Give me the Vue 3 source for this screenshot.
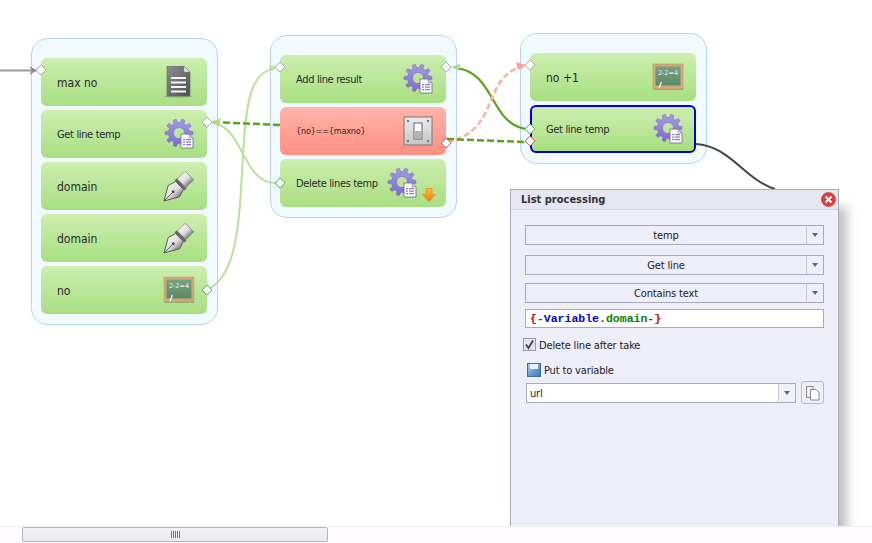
<script setup>
const groups = [
  {
    id: 1, x: 31, y: 38,
    nodes: [
      { label: "max no", icon: "doc", size: "big" },
      { label: "Get line temp", icon: "gear" },
      { label: "domain", icon: "pen", size: "big" },
      { label: "domain", icon: "pen", size: "big" },
      { label: "no", icon: "board", size: "big" },
    ],
  },
  {
    id: 2, x: 270, y: 35,
    nodes: [
      { label: "Add line result", icon: "gear" },
      { label: "{no}=={maxno}", icon: "switch", size: "tiny", red: true },
      { label: "Delete lines temp", icon: "gear", down: true },
    ],
  },
  {
    id: 3, x: 520, y: 33,
    nodes: [
      { label: "no +1", icon: "board", size: "big" },
      { label: "Get line temp", icon: "gear", selected: true },
    ],
  },
];

const ports = [
  { x: 41, y: 70 },
  { x: 207, y: 122 },
  { x: 207, y: 290, color: "#58b85a" },
  { x: 280, y: 67 },
  { x: 446, y: 67 },
  { x: 446, y: 143, color: "#f4585a" },
  { x: 280, y: 183, color: "#58b85a" },
  { x: 530, y: 65 },
  { x: 530, y: 129, color: "#58b85a" },
  { x: 530, y: 141, color: "#f4585a" },
];

const selects = [
  { text: "temp", gap: 0 },
  { text: "Get line", gap: 10 },
  { text: "Contains text", gap: 8 },
];

function diamond(p) {
  return `${p.x},${p.y - 5} ${p.x + 5},${p.y} ${p.x},${p.y + 5} ${p.x - 5},${p.y}`;
}

// gear outline, ten teeth round (16,15), with the hole cut by evenodd
function gearPath() {
  const cx = 16, cy = 15, r1 = 10.5, r2 = 14, n = 10;
  const pts = [];
  for (let i = 0; i < n; i++) {
    const a = (i / n) * Math.PI * 2;
    const w = Math.PI / n;
    const at = (r, t) => `${(cx + r * Math.cos(t)).toFixed(1)} ${(cy + r * Math.sin(t)).toFixed(1)}`;
    pts.push(at(r1, a - w * 0.62), at(r2, a - w * 0.36), at(r2, a + w * 0.36), at(r1, a + w * 0.62));
  }
  return `M${pts.join("L")}Z M${cx + 5.5} ${cy}a5.5 5.5 0 1 0 -11 0a5.5 5.5 0 1 0 11 0Z`;
}
const gear = gearPath();
</script>

<template>
  <div class="screen">
    <svg class="defs" width="0" height="0">
      <defs>
        <linearGradient id="gearFill" x1="0" y1="0" x2="0" y2="1">
          <stop offset="0" stop-color="#a79be6" />
          <stop offset="1" stop-color="#7d68cf" />
        </linearGradient>
        <linearGradient id="docFill" x1="0" y1="0" x2="1" y2="1">
          <stop offset="0" stop-color="#8f8f8f" />
          <stop offset="1" stop-color="#4f4f4f" />
        </linearGradient>
        <linearGradient id="penFill" x1="0" y1="0" x2="1" y2="0">
          <stop offset="0" stop-color="#f4f4f4" />
          <stop offset="0.55" stop-color="#dcdcdc" />
          <stop offset="1" stop-color="#808080" />
        </linearGradient>
        <linearGradient id="boardFill" x1="0" y1="0" x2="0" y2="1">
          <stop offset="0" stop-color="#7aa083" />
          <stop offset="1" stop-color="#5c8a66" />
        </linearGradient>
        <linearGradient id="switchFill" x1="0" y1="0" x2="0" y2="1">
          <stop offset="0" stop-color="#ececec" />
          <stop offset="1" stop-color="#c6c6c6" />
        </linearGradient>
        <linearGradient id="arrowFill" x1="0" y1="0" x2="0" y2="1">
          <stop offset="0" stop-color="#ffc22e" />
          <stop offset="1" stop-color="#f57a10" />
        </linearGradient>
        <linearGradient id="floppyFill" x1="0" y1="0" x2="1" y2="1">
          <stop offset="0" stop-color="#a8d0f0" />
          <stop offset="1" stop-color="#2f74b8" />
        </linearGradient>
      </defs>
    </svg>

    <div class="graph">
      <div
        v-for="group in groups"
        :key="group.id"
        class="group"
        :style="{ left: group.x + 'px', top: group.y + 'px' }"
      >
        <div
          v-for="(node, index) in group.nodes"
          :key="index"
          :class="['node', node.size, { red: node.red, selected: node.selected }]"
        >
          <span class="label">{{ node.label }}</span>
          <svg v-if="node.icon === 'doc'" class="icon" viewBox="0 0 32 32">
            <ellipse cx="15.5" cy="30.5" rx="14" ry="1" fill="#7c9a66" opacity="0.7" />
            <path d="M4 0H21L27 6V30H4Z" fill="url(#docFill)" stroke="#666" stroke-width="0.6" />
            <path d="M21 0L27 6H21Z" fill="#e2e2e2" stroke="#888" stroke-width="0.5" />
            <g fill="#f6f6f6">
              <rect x="8" y="11" width="15" height="2" />
              <rect x="8" y="15.5" width="15" height="2" />
              <rect x="8" y="20" width="15" height="2" />
              <rect x="8" y="24.5" width="15" height="2" />
            </g>
          </svg>
          <svg v-else-if="node.icon === 'gear'" class="icon" viewBox="0 0 32 32">
            <path :d="gear" fill="url(#gearFill)" fill-rule="evenodd" stroke="#7564c4" stroke-width="0.5" />
            <path d="M18 16H26L30 20V30H18Z" fill="#fbfbff" stroke="#6d6d78" stroke-width="0.8" />
            <path d="M26 16L30 20H26Z" fill="#d9d5f2" stroke="#77778a" stroke-width="0.5" />
            <g fill="#8878c8">
              <rect x="20" y="21" width="2" height="1.2" />
              <rect x="23" y="21" width="5" height="1.2" />
              <rect x="20" y="23.5" width="2" height="1.2" />
              <rect x="23" y="23.5" width="5" height="1.2" />
              <rect x="20" y="26" width="2" height="1.2" />
              <rect x="23" y="26" width="5" height="1.2" />
            </g>
          </svg>
          <svg v-else-if="node.icon === 'pen'" class="icon" viewBox="0 0 32 32">
            <g transform="translate(1 31) rotate(45)">
              <path d="M0 0L-8 -14L-5.5 -22H5.5L8 -14Z" fill="url(#penFill)" stroke="#555" stroke-width="0.9" />
              <path d="M0 0V-12" stroke="#444" stroke-width="0.8" />
              <circle cx="0" cy="-13" r="1.4" fill="#444" />
              <rect x="-7" y="-25" width="14" height="3" fill="#666" />
              <rect x="-6" y="-36" width="12" height="11" fill="url(#penFill)" stroke="#777" stroke-width="0.6" />
            </g>
          </svg>
          <svg v-else-if="node.icon === 'board'" class="icon" viewBox="0 0 32 32">
            <rect x="1" y="3" width="30" height="25" fill="#d2a878" stroke="#bd9260" stroke-width="0.5" />
            <rect x="3.5" y="5.5" width="25" height="19" fill="url(#boardFill)" />
            <text x="16" y="14" class="chalk" text-anchor="middle">2-2=4</text>
            <path d="M7 27L9.5 21" stroke="#f2f2f2" stroke-width="1.4" />
            <rect x="2" y="28" width="29" height="1" fill="#7fa268" opacity="0.7" />
          </svg>
          <svg v-else-if="node.icon === 'switch'" class="icon" viewBox="0 0 32 32">
            <rect x="2" y="2" width="28" height="28" fill="url(#switchFill)" stroke="#777" />
            <g fill="#777">
              <circle cx="6" cy="6" r="1.2" />
              <circle cx="26" cy="6" r="1.2" />
              <circle cx="6" cy="26" r="1.2" />
              <circle cx="26" cy="26" r="1.2" />
            </g>
            <rect x="12" y="8" width="8" height="16" fill="#fafafa" stroke="#666" />
            <rect x="12.5" y="16" width="7" height="7.5" fill="#b4b4b4" />
          </svg>
          <svg v-if="node.down" class="down" viewBox="0 0 14 14">
            <path d="M4 0.5H10V6.5H13.5L7 13.5L0.5 6.5H4Z" fill="url(#arrowFill)" stroke="#e8851a" stroke-width="0.6" />
          </svg>
        </div>
      </div>

      <svg class="edges" width="872" height="526">
        <g fill="none">
          <path d="M0 70.5H34" stroke="#999" stroke-width="2" />
          <path d="M207 122C245 122 240 183 276 183" stroke="#b4e59a" stroke-width="2" />
          <path d="M207 290C232 278 238 240 241 190C245 120 245 72 274 69" stroke="#b4e59a" stroke-width="2" />
          <path d="M213 122L280 125" stroke="#52a816" stroke-width="2.5" stroke-dasharray="7 3" />
          <path d="M456 68C495 72 490 124 526 129" stroke="#52a816" stroke-width="2.2" />
          <path d="M447 142C500 132 482 76 522 67" stroke="#ffb0a4" stroke-width="2.5" stroke-dasharray="6 3" />
          <path d="M447 139L526 142" stroke="#52a816" stroke-width="2.5" stroke-dasharray="7 3" />
          <path d="M696 144C730 146 745 180 775 189" stroke="#444" stroke-width="2" />
        </g>
        <polygon points="29,66 37,70.5 29,75 32,70.5" fill="#888" />
        <polygon points="212,122 221,118 219,126" fill="#a8e088" />
        <polygon points="277,67 269,65 270,72" fill="#b4e59a" />
        <polygon points="451,67 460,64 459,71" fill="#a8e088" />
        <polygon points="526,65 516,62 518,70" fill="#ff9f94" />
        <polygon
          v-for="(port, index) in ports"
          :key="index"
          :points="diamond(port)"
          fill="#fff"
          :stroke="port.color || '#aaa'"
          stroke-width="1"
        />
      </svg>

      <div class="panel">
        <div class="panel-head">
          <span>List processing</span>
          <svg class="close" viewBox="0 0 15 15" width="15" height="15">
            <circle cx="7.5" cy="7.5" r="7" fill="#e63a3a" stroke="#b92a2a" stroke-width="0.6" />
            <path d="M4.5 4.5L10.5 10.5M10.5 4.5L4.5 10.5" stroke="#fff" stroke-width="2" />
          </svg>
        </div>
        <div class="panel-body">
          <div
            v-for="item in selects"
            :key="item.text"
            class="select"
            :style="{ marginTop: item.gap + 'px' }"
          >
            <span class="select-text">{{ item.text }}</span>
            <span class="caret"><i></i></span>
          </div>
          <div class="code"><b class="r">{-</b><b class="b">Variable</b><b class="k">.</b><b class="g">domain</b><b class="r">-}</b></div>
          <div class="check">
            <svg viewBox="0 0 13 13" width="13" height="13">
              <rect x="0.5" y="0.5" width="12" height="12" fill="#e4e4ea" stroke="#9a9aa6" />
              <path d="M3 6.5L5.5 10L10 2.5" fill="none" stroke="#444" stroke-width="1.8" />
            </svg>
            <span>Delete line after take</span>
          </div>
          <div class="put">
            <svg viewBox="0 0 14 14" width="14" height="14">
              <rect x="0.5" y="0.5" width="13" height="13" fill="url(#floppyFill)" stroke="#3a6ea0" />
              <rect x="3" y="1" width="8" height="5" fill="#e8f2fb" />
            </svg>
            <span>Put to variable</span>
          </div>
          <div class="combo-row">
            <div class="combo">
              <span class="combo-text">url</span>
              <span class="caret"><i></i></span>
            </div>
            <div class="copy">
              <svg viewBox="0 0 16 16" width="16" height="16">
                <path d="M1.5 1.5H8V12.5H1.5Z" fill="#f4f4f8" stroke="#888" />
                <path d="M5.5 4.5H11L14 7.5V15H5.5Z" fill="#fff" stroke="#888" />
              </svg>
            </div>
          </div>
        </div>
      </div>
    </div>

    <div class="scrollbar">
      <div class="thumb"><i></i><i></i><i></i><i></i><i></i></div>
    </div>
  </div>
</template>

<style scoped>
.screen {
  width: 872px;
  height: 543px;
  display: flex;
  flex-direction: column;
  background: #fff;
  overflow: hidden;
  font-family: "DejaVu Sans Condensed", "DejaVu Sans", sans-serif;
  color: #222;
}
.defs {
  position: absolute;
}
.graph {
  position: relative;
  height: 526px;
  overflow: hidden;
}
.group {
  position: absolute;
  box-sizing: border-box;
  width: 187px;
  padding: 19px 10px 10px 9px;
  display: flex;
  flex-direction: column;
  gap: 4px;
  background: #f2f9ff;
  border: 1px solid #b5d5f2;
  border-radius: 17px;
}
.node {
  box-sizing: border-box;
  height: 48px;
  display: flex;
  align-items: center;
  padding: 0 12px 0 16px;
  border-radius: 6px;
  background: linear-gradient(#cdeeaf, #a8df82);
  font-size: 11px;
  letter-spacing: -0.35px;
}
.node.big {
  font-size: 12px;
  letter-spacing: 0;
}
.node.big .label {
  padding-top: 2px;
}
.node.tiny {
  font-size: 9px;
  letter-spacing: -0.2px;
}
.node.red {
  background: linear-gradient(#ffb4ac, #ff8f82);
}
.node.selected {
  border: 2px solid #0000e6;
  padding: 0 10px 0 14px;
}
.label {
  flex: 1;
  color: #2a2a2a;
}
.icon {
  width: 32px;
  height: 32px;
  flex: none;
}
.down {
  width: 14px;
  height: 14px;
  flex: none;
  margin: 24px -2px 0 4px;
}
.edges {
  position: absolute;
  left: 0;
  top: 0;
}
.chalk {
  font-family: "DejaVu Sans", sans-serif;
  font-size: 6.5px;
  fill: #e8f0e8;
}
.panel {
  position: absolute;
  left: 510px;
  top: 189px;
  box-sizing: border-box;
  width: 329px;
  height: 400px;
  background: #edeef7;
  border: 1px solid #a9aabb;
  box-shadow: 8px 18px 10px rgba(0, 0, 0, 0.25);
  font-size: 11px;
}
.panel-head {
  height: 19px;
  display: flex;
  align-items: center;
  justify-content: space-between;
  padding: 0 2px 0 10px;
  background: #e5e6f0;
  border-bottom: 1px solid #d5d6e2;
  font-weight: bold;
  color: #333;
}
.close {
  display: block;
}
.panel-body {
  padding: 15px 14px 0;
  display: flex;
  flex-direction: column;
  letter-spacing: -0.15px;
}
.select {
  box-sizing: border-box;
  height: 20px;
  display: flex;
  border: 1px solid #a9aabb;
}
.select-text {
  flex: 1;
  text-align: center;
  line-height: 20px;
}
.caret {
  width: 16px;
  flex: none;
  display: flex;
  align-items: center;
  justify-content: center;
  border-left: 1px solid #c8c9d6;
}
.caret i {
  width: 0;
  height: 0;
  border-left: 3.5px solid transparent;
  border-right: 3.5px solid transparent;
  border-top: 4px solid #666;
}
.code {
  box-sizing: border-box;
  height: 19px;
  margin-top: 6px;
  padding-left: 4px;
  background: #fff;
  border: 1px solid #a9aabb;
  font-family: "Liberation Mono", monospace;
  font-size: 11.5px;
  line-height: 17px;
  letter-spacing: 0;
}
.r { color: #e00000; }
.b { color: #0000e0; }
.k { color: #333; }
.g { color: #008000; }
.check {
  display: flex;
  align-items: center;
  gap: 3px;
  margin: 10px 0 0 -2px;
  height: 13px;
}
.check span {
  padding-top: 1px;
}
.check svg,
.put svg {
  flex: none;
}
.put {
  display: flex;
  align-items: center;
  gap: 3px;
  margin: 12px 0 0 2px;
  height: 14px;
}
.combo-row {
  display: flex;
  align-items: center;
  gap: 5px;
  margin: 4px 0 0 1px;
}
.combo {
  box-sizing: border-box;
  width: 270px;
  height: 20px;
  display: flex;
  background: #fff;
  border: 1px solid #a9aabb;
}
.combo-text {
  flex: 1;
  padding-left: 3px;
  line-height: 20px;
}
.combo .caret {
  background: #f0f1f7;
}
.copy {
  box-sizing: border-box;
  width: 23px;
  height: 23px;
  display: flex;
  align-items: center;
  justify-content: center;
  border: 1px solid #b9bac8;
  border-radius: 3px;
}
.scrollbar {
  flex: 1;
  background: #fdfbfd;
  border-top: 1px solid #f1eef1;
  padding: 0 0 0 22px;
}
.thumb {
  box-sizing: border-box;
  width: 306px;
  height: 15px;
  display: flex;
  align-items: center;
  justify-content: center;
  gap: 1px;
  background: linear-gradient(#f2f1f4, #ebeaee);
  border: 1px solid #b4b4c2;
  border-radius: 2px;
}
.thumb i {
  width: 1px;
  height: 7px;
  background: #777;
}
</style>
